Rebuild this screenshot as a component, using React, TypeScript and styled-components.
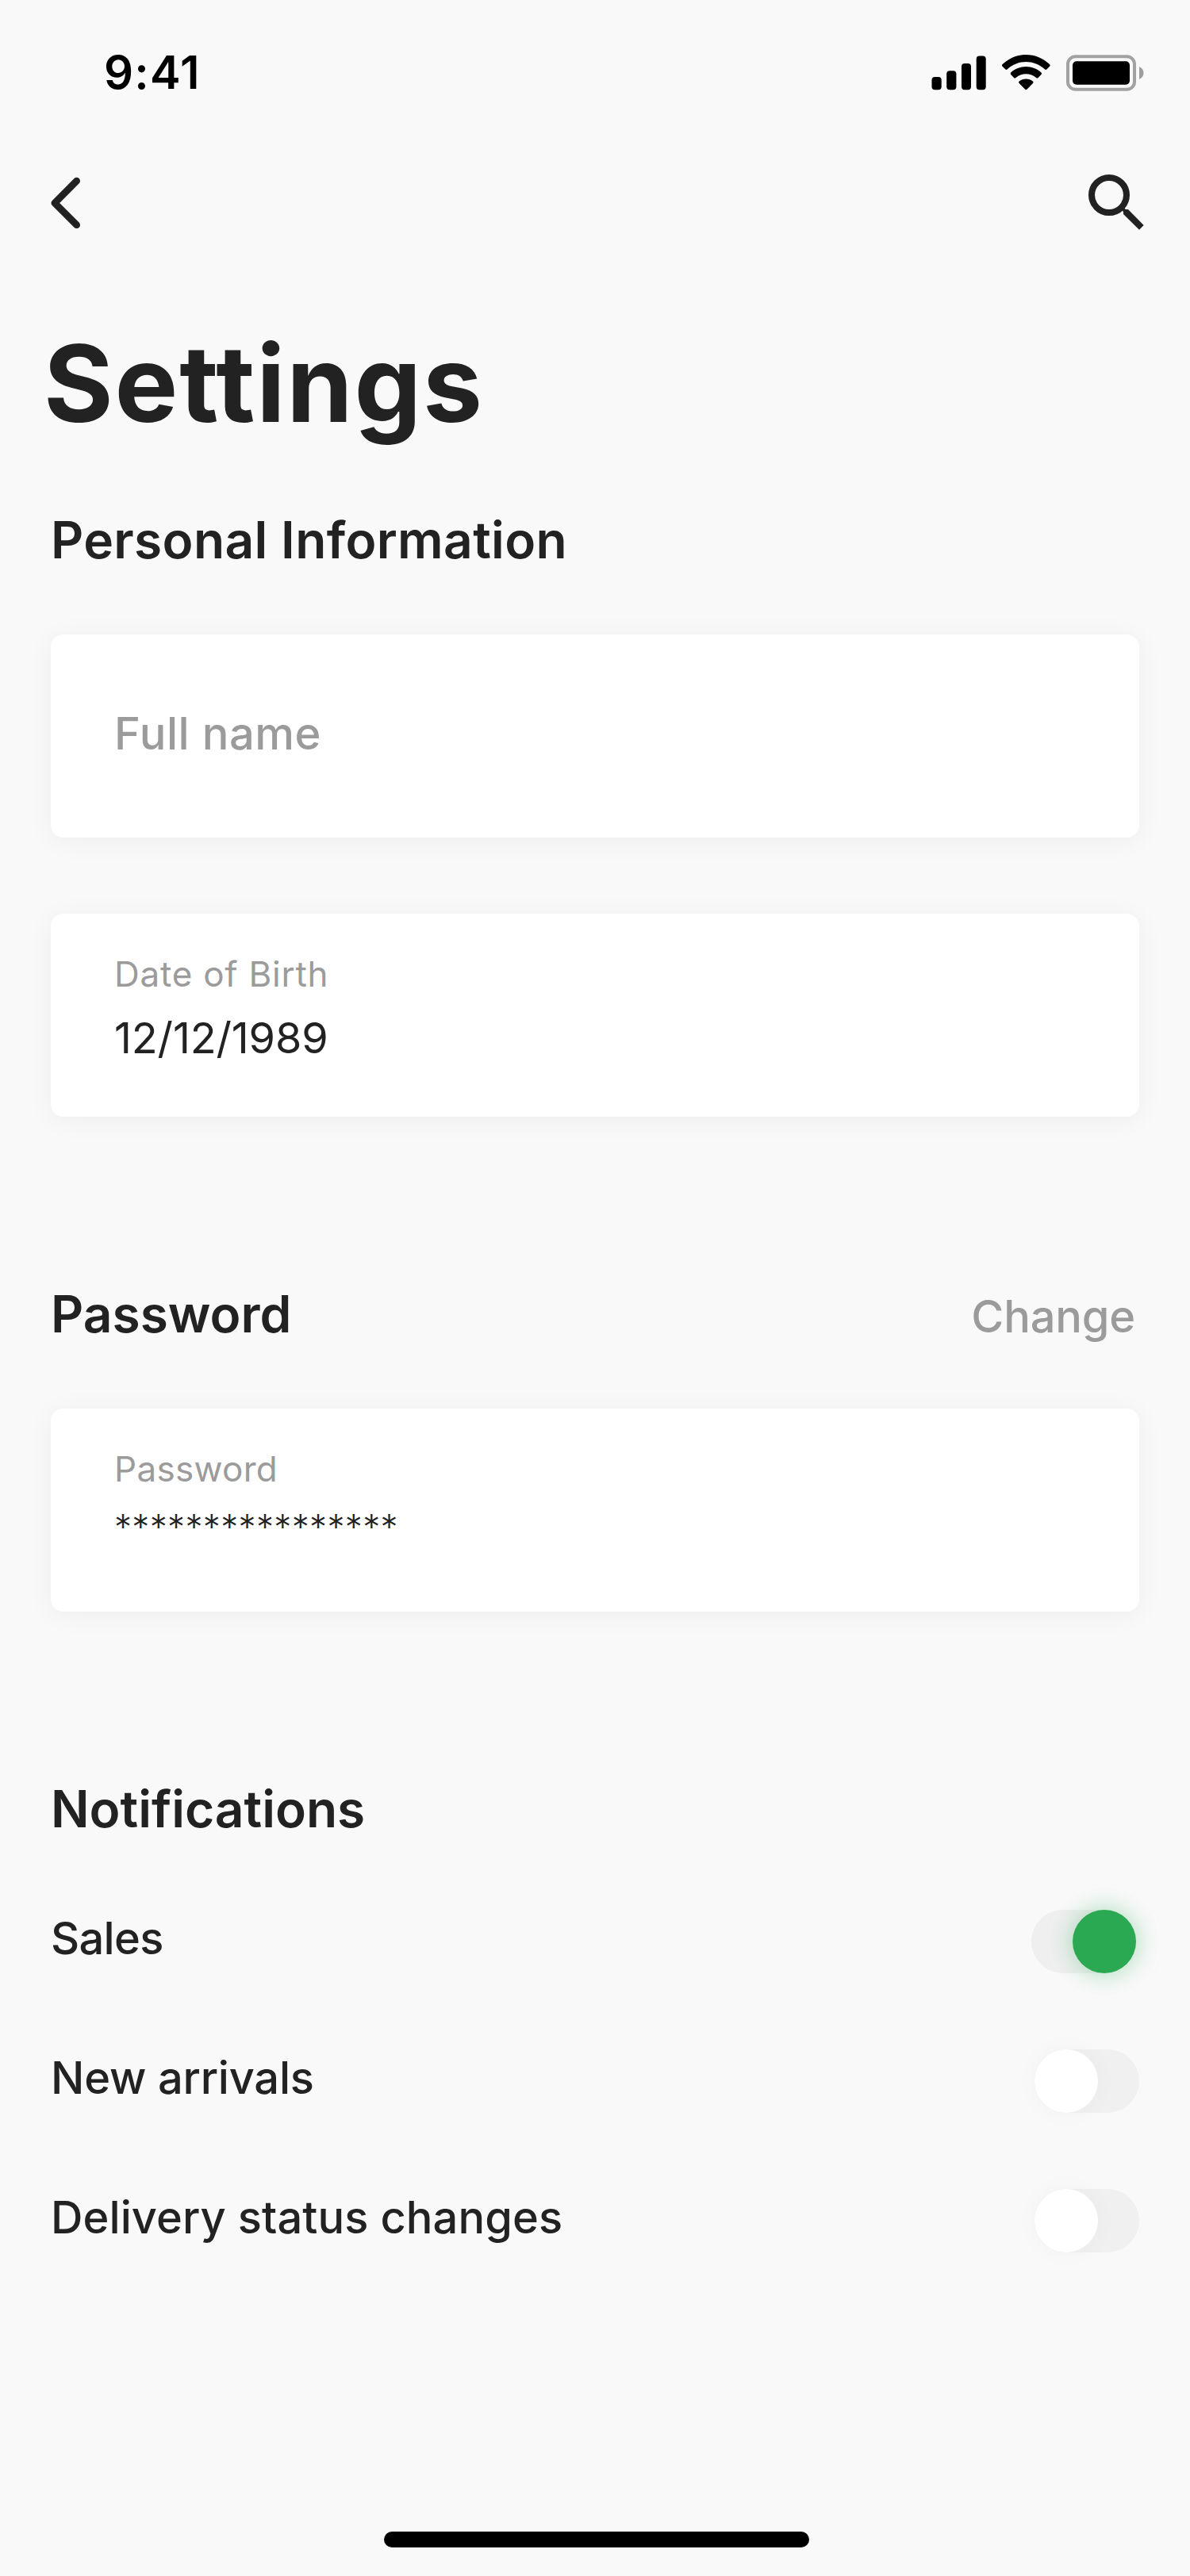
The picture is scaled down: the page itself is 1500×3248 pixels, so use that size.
import React, { useState } from "react";
import styled, { createGlobalStyle } from "styled-components";

const GlobalStyle = createGlobalStyle`
  * { box-sizing: border-box; }
  body { margin: 0; background: #f9f9f9; }
`;

const Screen = styled.main`
  width: 1500px;
  height: 3248px;
  display: flex;
  flex-direction: column;
  background: #f9f9f9;
  color: #222222;
  font-family: Inter, "Liberation Sans", sans-serif;
  overflow: hidden;
`;

const StatusBar = styled.div`
  height: 184px;
  padding: 0 58px 0 131px;
  display: flex;
  align-items: center;
  justify-content: space-between;
`;

const Time = styled.span`
  padding-bottom: 2px;
  font-size: 58px;
  line-height: 70px;
  font-weight: 600;
  letter-spacing: 1.2px;
  color: #000000;
`;

const NavBar = styled.nav`
  height: 144px;
  padding: 0 56px 0 60px;
  display: flex;
  align-items: center;
  justify-content: space-between;
`;

const IconButton = styled.button`
  display: flex;
  padding: 0;
  border: 0;
  background: none;
`;

const Content = styled.div`
  padding: 75px 64px 0;
  display: flex;
  flex-direction: column;
`;

const Title = styled.h1`
  margin: 0 0 78px -9px;
  font-size: 134px;
  line-height: 160px;
  font-weight: 700;
  letter-spacing: 1.8px;
`;

const Section = styled.section`
  display: flex;
  flex-direction: column;
  margin-bottom: 209px;
`;

const SectionHead = styled.header`
  display: flex;
  align-items: baseline;
  justify-content: space-between;
  padding-right: 5px;
`;

const Heading = styled.h2<{ $tracking: number }>`
  margin: 0;
  font-size: 64px;
  line-height: 80px;
  font-weight: 600;
  letter-spacing: ${(p) => p.$tracking}px;
`;

const ChangeLink = styled.button`
  padding: 0;
  border: 0;
  background: none;
  font: 500 56px/72px Inter, "Liberation Sans", sans-serif;
  letter-spacing: -0.2px;
  color: #9b9b9b;
`;

const Fields = styled.div`
  display: flex;
  flex-direction: column;
  gap: 96px;
  margin-top: 79px;
`;

const Card = styled.div<{ $empty?: boolean }>`
  height: 256px;
  padding: ${(p) => (p.$empty ? "0 80px 7px" : "48px 80px 0")};
  display: flex;
  flex-direction: column;
  justify-content: ${(p) => (p.$empty ? "center" : "flex-start")};
  border-radius: 16px;
  background: #ffffff;
  box-shadow: 0 4px 32px rgba(0, 0, 0, 0.05);
`;

const Placeholder = styled.span`
  font-size: 56px;
  line-height: 72px;
  font-weight: 500;
  letter-spacing: 0.55px;
  color: #9b9b9b;
`;

const FieldLabel = styled.span<{ $tracking: number }>`
  font-size: 44px;
  line-height: 56px;
  letter-spacing: ${(p) => p.$tracking}px;
  color: #9b9b9b;
`;

const FieldValue = styled.span`
  margin-top: 17px;
  font-size: 54px;
  line-height: 72px;
  letter-spacing: -0.15px;
`;

const MaskedValue = styled.span`
  margin-top: 9px;
  font-size: 44px;
  line-height: 72px;
  font-weight: 300;
  letter-spacing: 0.35px;
`;

const Options = styled.div`
  display: flex;
  flex-direction: column;
  gap: 96px;
  margin-top: 87px;
`;

const Option = styled.div`
  height: 80px;
  display: flex;
  align-items: center;
  justify-content: space-between;
`;

const OptionLabel = styled.span<{ $tracking: number }>`
  padding-bottom: 8px;
  font-size: 56px;
  line-height: 72px;
  font-weight: 500;
  letter-spacing: ${(p) => p.$tracking}px;
`;

const Track = styled.button<{ $on: boolean }>`
  width: 132px;
  height: 80px;
  padding: 0;
  margin-right: ${(p) => (p.$on ? 4 : 0)}px;
  display: flex;
  justify-content: ${(p) => (p.$on ? "flex-end" : "flex-start")};
  border: 0;
  border-radius: 40px;
  background: ${(p) => (p.$on ? "#efefef" : "#f0f0f0")};
`;

const Knob = styled.span<{ $on: boolean }>`
  width: 80px;
  height: 80px;
  border-radius: 50%;
  background: ${(p) => (p.$on ? "#2aa952" : "#ffffff")};
  box-shadow: ${(p) => (p.$on ? "0 0 32px rgba(42, 169, 82, 0.4)" : "0 0 32px rgba(0, 0, 0, 0.03)")};
`;

const HomeIndicator = styled.div`
  width: 536px;
  height: 20px;
  margin: auto 0 36px 484px;
  border-radius: 10px;
  background: #000000;
`;

function StatusIcons() {
  return (
    <svg width="268" height="46" viewBox="1174 69 268 46" aria-hidden="true">
      <rect x="1174.5" y="97" width="12.2" height="16.3" rx="4" />
      <rect x="1193.2" y="89.2" width="12.2" height="24.1" rx="4" />
      <rect x="1212" y="80" width="12" height="33.3" rx="4" />
      <rect x="1230.7" y="70.5" width="12" height="42.8" rx="4" />
      <path d="M1293.3 69C1282 69 1271.5 73.5 1263.6 81.1Q1262.3 82.4 1263.6 83.7L1267.2 87.3Q1268.5 88.5 1269.8 87.3C1276 81.3 1284.4 77.9 1293.3 77.9S1310.7 81.3 1316.9 87.3Q1318.2 88.5 1319.5 87.3L1323 83.7Q1324.3 82.4 1323 81.1C1315.2 73.5 1304.6 69 1293.3 69Z" />
      <path d="M1293.3 84C1286 84 1279.3 86.8 1274.2 91.5Q1272.9 92.8 1274.2 94.1L1278 98Q1279.2 99.2 1280.5 98C1283.9 94.9 1288.3 93.2 1293.3 93.2S1302.7 94.9 1306.1 98Q1307.4 99.2 1308.6 98L1312.5 94.1Q1313.7 92.8 1312.5 91.5C1307.3 86.8 1300.6 84 1293.3 84Z" />
      <path d="M1293.3 99.5C1290 99.5 1287 100.6 1284.7 102.4Q1283.2 103.7 1284.7 105.1L1292 112.4Q1293.3 113.7 1294.6 112.4L1302 105.1Q1303.4 103.7 1302 102.4C1299.6 100.6 1296.6 99.5 1293.3 99.5Z" />
      <rect x="1346" y="71.3" width="84" height="41.4" rx="9.5" fill="none" stroke="#a2a2a2" strokeWidth="4" />
      <rect x="1352" y="77.2" width="72" height="29.6" rx="5" />
      <path d="M1436 84C1439.5 85.5 1441.5 88.5 1441.5 92S1439.5 98.5 1436 100Z" fill="#9d9d9d" />
    </svg>
  );
}

function BackIcon() {
  return (
    <svg width="46" height="72" viewBox="60 220 46 72" fill="none" aria-hidden="true">
      <path d="M96.6 228.2L68.9 256L96.6 283.7" stroke="#222222" strokeWidth="8.8" strokeLinecap="round" strokeLinejoin="round" />
    </svg>
  );
}

function SearchIcon() {
  return (
    <svg width="76" height="74" viewBox="1368 219 76 74" aria-hidden="true">
      <circle cx="1398" cy="246" r="22" fill="none" stroke="#222222" strokeWidth="8" />
      <path d="M1422 264L1441.7 284L1436 289.7L1416 270V267L1414.5 265.5L1417.3 262.5L1419 264Z" fill="#222222" />
    </svg>
  );
}

const notificationOptions = [
  { label: "Sales", on: true, tracking: -0.7 },
  { label: "New arrivals", on: false, tracking: -0.2 },
  { label: "Delivery status changes", on: false, tracking: 0.07 },
];

function Toggle({ label, initial }: { label: string; initial: boolean }) {
  const [on, setOn] = useState(initial);
  return (
    <Track $on={on} role="switch" aria-checked={on} aria-label={label} onClick={() => setOn(!on)}>
      <Knob $on={on} />
    </Track>
  );
}

export default function App() {
  return (
    <>
      <GlobalStyle />
      <Screen>
        <StatusBar>
          <Time>9:41</Time>
          <StatusIcons />
        </StatusBar>
        <NavBar>
          <IconButton aria-label="Back"><BackIcon /></IconButton>
          <IconButton aria-label="Search"><SearchIcon /></IconButton>
        </NavBar>
        <Content>
          <Title>Settings</Title>
          <Section>
            <SectionHead>
              <Heading $tracking={0.35}>Personal Information</Heading>
            </SectionHead>
            <Fields>
              <Card $empty>
                <Placeholder>Full name</Placeholder>
              </Card>
              <Card>
                <FieldLabel $tracking={0.75}>Date of Birth</FieldLabel>
                <FieldValue>12/12/1989</FieldValue>
              </Card>
            </Fields>
          </Section>
          <Section>
            <SectionHead>
              <Heading $tracking={0}>Password</Heading>
              <ChangeLink>Change</ChangeLink>
            </SectionHead>
            <Fields>
              <Card>
                <FieldLabel $tracking={0.3}>Password</FieldLabel>
                <MaskedValue>****************</MaskedValue>
              </Card>
            </Fields>
          </Section>
          <Section>
            <SectionHead>
              <Heading $tracking={0}>Notifications</Heading>
            </SectionHead>
            <Options>
              {notificationOptions.map((o) => (
                <Option key={o.label}>
                  <OptionLabel $tracking={o.tracking}>{o.label}</OptionLabel>
                  <Toggle label={o.label} initial={o.on} />
                </Option>
              ))}
            </Options>
          </Section>
        </Content>
        <HomeIndicator />
      </Screen>
    </>
  );
}
